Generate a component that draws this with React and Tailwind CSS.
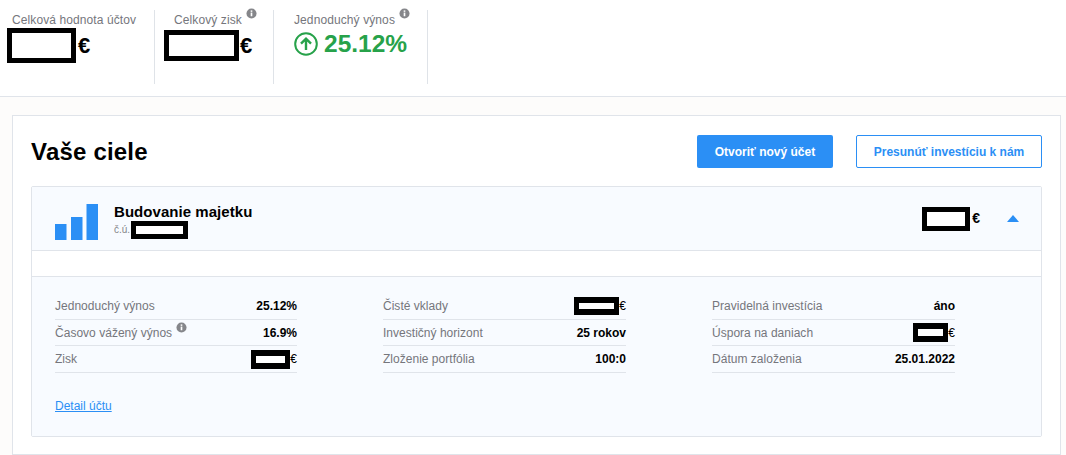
import React from 'react';

const font = { sans: "font-['Liberation_Sans',Arial,sans-serif]" };

const Redact = ({ className }) => (
    <span className={`inline-block bg-white border-black shrink-0 ${className}`} />
);

const InfoDot = ({ className = '' }) => (
    <svg viewBox="0 0 12 12" className={`w-[11px] h-[11px] shrink-0 ${className}`}>
        <circle cx="6" cy="6" r="5.5" fill="#85868a" />
        <rect x="5.1" y="5" width="1.8" height="4" fill="#fff" />
        <rect x="5.1" y="2.6" width="1.8" height="1.6" fill="#fff" />
    </svg>
);

const ArrowUpCircle = () => (
    <svg viewBox="0 0 24 24" className="w-[24px] h-[24px] shrink-0" fill="none" stroke="#27a24a" strokeWidth="2">
        <circle cx="12" cy="12" r="10.8" />
        <path d="M12 18V6.8M7 11.6l5-5 5 5" strokeWidth="2.4" />
    </svg>
);

const Row = ({ label, value, info, redact }) => (
    <div className="flex justify-between items-center h-[26.5px] pt-[1px] border-b border-[#e0e4ea]">
        <span className="flex items-start text-[12px] tracking-[0.02px] text-[#75767c]">
            {label}
            {info && <InfoDot className="ml-[4px] -mt-[2px]" />}
        </span>
        {redact ? (
            <span className="flex items-center text-[12px] text-black">
                <Redact className={redact} />€
            </span>
        ) : (
            <span className="text-[12px] font-bold text-black">{value}</span>
        )}
    </div>
);

const columns = [
    [
        { label: 'Jednoduchý výnos', value: '25.12%' },
        { label: 'Časovo vážený výnos', value: '16.9%', info: true },
        { label: 'Zisk', redact: 'w-[39px] h-[19px] border-x-[5px] border-y-[6px]' },
    ],
    [
        { label: 'Čisté vklady', redact: 'w-[45px] h-[18px] border-x-[5px] border-y-[6px]' },
        { label: 'Investičný horizont', value: '25 rokov' },
        { label: 'Zloženie portfólia', value: '100:0' },
    ],
    [
        { label: 'Pravidelná investícia', value: 'áno' },
        { label: 'Úspora na daniach', redact: 'w-[35px] h-[19px] border-x-[5px] border-y-[6px]' },
        { label: 'Dátum založenia', value: '25.01.2022' },
    ],
];

export default function App() {
    return (
        <div className={`${font.sans} w-[1066px] h-[455px] overflow-hidden bg-[#fdfcfb]`}>
            {/* Top stats */}
            <div className="h-[97px] bg-white border-b border-[#e0e4ea] pt-[10px] flex items-start">
                <div className="w-[155px] h-[74px] border-r border-[#dfe3e8] pl-[12px] pt-[3px]">
                    <div className="text-[12px] tracking-[0.1px] text-[#75767c] leading-[14px]">Celková hodnota účtov</div>
                    <div className="flex items-center -ml-[5px] mt-[1px] text-[22px] font-bold text-black leading-none">
                        <Redact className="w-[69px] h-[35px] border-[5px]" />
                        <span className="ml-[2px]">€</span>
                    </div>
                </div>
                <div className="w-[119px] h-[74px] border-r border-[#dfe3e8] pl-[19px] pt-[3px]">
                    <div className="flex items-start text-[12px] tracking-[0.1px] text-[#75767c] leading-[14px]">
                        Celkový zisk
                        <InfoDot className="ml-[4px] -mt-[5px]" />
                    </div>
                    <div className="flex items-center -ml-[10px] mt-[3px] text-[22px] font-bold text-black leading-none">
                        <Redact className="w-[75px] h-[31px] border-[5px]" />
                        <span className="ml-[1px]">€</span>
                    </div>
                </div>
                <div className="w-[154px] h-[74px] border-r border-[#dfe3e8] pl-[20px] pt-[3px]">
                    <div className="flex items-start text-[12px] tracking-[0.1px] text-[#75767c] leading-[14px]">
                        Jednoduchý výnos
                        <InfoDot className="ml-[4px] -mt-[5px]" />
                    </div>
                    <div className="flex items-center mt-[5px] gap-[6px] text-[24.5px] font-bold text-[#27a24a] leading-none">
                        <ArrowUpCircle />
                        25.12%
                    </div>
                </div>
            </div>

            {/* Goals card */}
            <div className="mt-[18px] ml-[12px] w-[1049px] h-[340px] bg-white border border-[#e0e4ea] px-[18px]">
                <div className="flex items-center justify-between h-[70px] pt-[1px]">
                    <h1 className="text-[24px] font-bold text-black tracking-[0.2px]">Vaše ciele</h1>
                    <div className="flex gap-[23px]">
                        <button className="w-[136px] h-[33px] bg-[#2b8ff5] rounded-[2px] text-white text-[12px] font-bold">
                            Otvoriť nový účet
                        </button>
                        <button className="w-[186px] h-[33px] bg-white border border-[#2b8ff5] rounded-[2px] text-[#2b8ff5] text-[12px] font-bold">
                            Presunúť investíciu k nám
                        </button>
                    </div>
                </div>

                <div className="border border-[#e0e4ea] rounded-[2px] h-[251px]">
                    <div className="h-[64px] bg-[#f8fbff] border-b border-[#e0e4ea] flex items-center pl-[23px] pr-[22px]">
                        <svg viewBox="0 0 44 36" className="w-[44px] h-[36px] mt-[7px] shrink-0" fill="#2b8ff5">
                            <rect x="0" y="20" width="11.5" height="16" />
                            <rect x="16" y="13" width="11.5" height="23" />
                            <rect x="31.5" y="0" width="11.5" height="36" />
                        </svg>
                        <div className="ml-[15px] mt-[5px]">
                            <div className="text-[15px] font-bold text-black tracking-[0.05px] leading-[18px]">Budovanie majetku</div>
                            <div className="flex items-center text-[10px] text-[#85868a] leading-none">
                                č.ú.
                                <Redact className="ml-[1px] w-[57px] h-[18px] border-[5px]" />
                            </div>
                        </div>
                        <div className="ml-auto flex items-center text-[14px] font-bold text-black">
                            <Redact className="w-[48px] h-[24px] border-[5px]" />
                            <span className="ml-[2px]">€</span>
                        </div>
                        <div className="ml-[27px] w-0 h-0 border-x-[6px] border-x-transparent border-b-[7px] border-b-[#2b8ff5]" />
                    </div>
                    <div className="h-[26px] border-b border-[#e0e4ea]" />
                    <div className="h-[159px] bg-[#f8fbff] pt-[16px] px-[23px]">
                        <div className="grid grid-cols-[242px_243px_243px] gap-x-[86px]">
                            {columns.map((rows, i) => (
                                <div key={i}>
                                    {rows.map((row) => (
                                        <Row key={row.label} {...row} />
                                    ))}
                                </div>
                            ))}
                        </div>
                        <a href="#" className="block mt-[24px] text-[12px] text-[#2b8ff5] underline">
                            Detail účtu
                        </a>
                    </div>
                </div>
            </div>
        </div>
    );
}
